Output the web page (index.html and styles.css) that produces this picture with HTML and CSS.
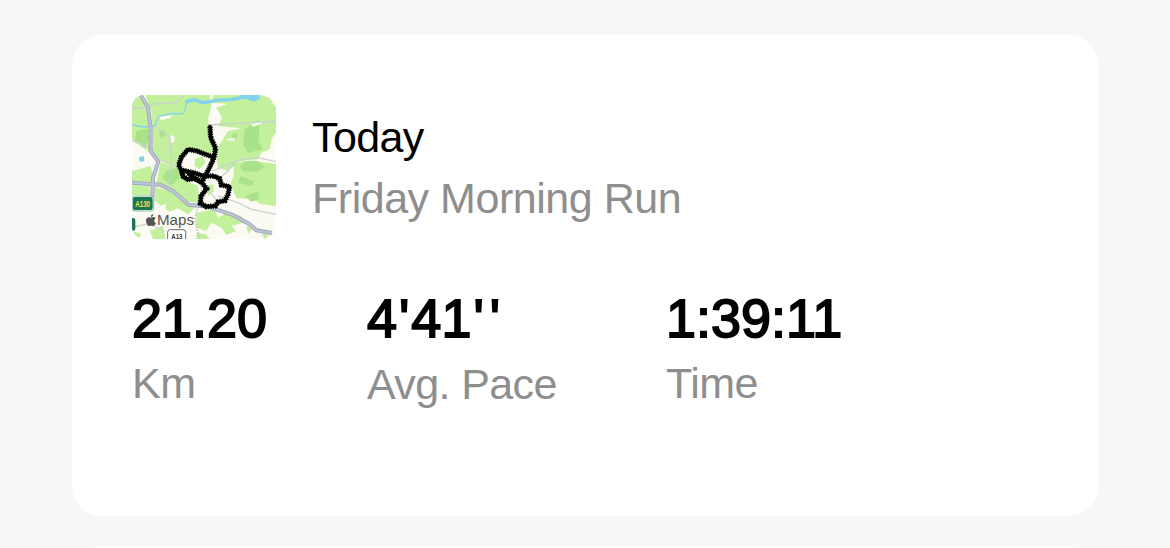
FILE: index.html
```
<!DOCTYPE html>
<html lang="en">
<head>
    <meta charset="UTF-8">
    <title>Activity</title>
    <link rel="stylesheet" href="styles.css">
</head>
<body>
    <div class="feed">
        <div class="card">
            <div class="card-header">
                <svg class="map" viewBox="12 12 432 432">
                    <rect class="land" x="12" y="12" width="432" height="432"/>
                    <!-- fields -->
                    <g class="field">
                        <path d="M52 12H245L250 45L240 85L245 115L265 190L200 180L160 185L150 230L95 208L76 180L74 110L70 60Z"/>
                        <path d="M12 20L35 12L60 60L64 140L66 185L30 160L12 150Z"/>
                        <path d="M255 12H400L425 22L444 50V125L432 140L425 175L400 185L390 205L335 210L300 240L270 230L265 200L272 165L300 120L340 112L270 106L282 80L265 50L300 38L250 36Z"/>
                        <path d="M315 215L370 208L444 220V345L400 340L375 325L325 322L308 280L318 250Z"/>
                        <path d="M98 212L150 232L165 265L210 285L215 335L180 332L140 300L85 276Z"/>
                        <path d="M12 240L68 225L76 260L68 274L12 270ZM12 283L65 286L68 312H12Z"/>
                        <path d="M80 288L130 302L160 330L200 350L180 370L150 352L125 362L80 330Z"/>
                        <path d="M205 365L260 355L270 380L300 362L340 375L345 395L310 405L325 420L295 432L280 410L250 395L235 420L205 410Z"/>
                        <path d="M200 205L225 195L232 215L215 235L200 225ZM235 283L255 280L258 300L240 315Z"/>
                        <path d="M12 420L40 428L30 444H12ZM65 420L105 405L112 444H75ZM205 425L235 430L245 444H205ZM355 405L375 410L360 428ZM400 425L425 432L410 444Z"/>
                    </g>
                    <g class="wood">
                        <path d="M25 120L60 112L64 145L50 170L20 148Z"/>
                        <path d="M92 122L110 118L112 132L98 140Z"/>
                        <path d="M350 115L395 85L392 150L405 175L360 185L345 160Z"/>
                        <path d="M335 225L350 212L390 210L410 228L385 242L345 240Z"/>
                        <path d="M112 240L145 232L155 262L130 285L105 260Z"/>
                        <path d="M338 255L380 272L370 285L330 275ZM350 315L390 302L394 325L370 332Z"/>
                        <path d="M312 130L328 124L325 145L310 148Z"/>
                    </g>
                    <g class="land">
                        <path d="M95 78L130 72L128 80L100 88ZM122 138L138 132L140 150L128 158ZM370 100L405 90L400 98L375 108ZM295 144L322 141L318 149L296 148Z"/>
                        <path d="M12 155L40 170L60 200L50 225L12 235Z"/>
                        <path d="M95 345L115 338L108 362L90 370ZM135 375L155 360L165 375L145 385Z"/>
                    </g>
                    <!-- water -->
                    <g class="water">
                        <path class="stream" d="M12 102L48 108L80 105L92 76L130 68L165 68L174 50L173 30L190 24"/>
                        <path class="river" d="M175 33L200 26L222 35L245 32L270 27L310 26L350 18L395 18"/>
                        <path class="pond" d="M335 12H390L397 22L378 32L350 22ZM33 198L48 196L49 210L35 213Z"/>
                    </g>
                    <!-- small roads -->
                    <g class="lane">
                        <path d="M68 40L145 34L170 12M12 54L60 48M80 105L125 138L132 210L120 285M95 205L150 230M12 146L75 175M240 102L444 90"/>
                        <path d="M255 240L330 208L390 200L444 212M325 208L300 240L265 270"/>
                        <path d="M270 315L330 335L370 355L444 370M245 300L275 340M12 410L60 398L110 420"/>
                    </g>
                    <!-- main roads -->
                    <path class="road-edge" d="M38 12L60 48L68 110V180L91 212L75 260L73 320M12 275L95 281L135 300L182 341L240 347L310 370L365 400L385 418L432 426"/>
                    <path class="road" d="M38 12L60 48L68 110V180L91 212L75 260L73 320M12 275L95 281L135 300L182 341L240 347L310 370L365 400L385 418L432 426"/>
                    <path class="dotted" d="M210 345L200 385L215 444"/>
                    <!-- route -->
                    <path class="route-core" d="M246 107L248 140L263 172L258 200L243 233L228 262L221 274L200 263L179 265L165 256L159 237L152 222L160 199L180 175L207 180L232 190L258 199"/>
                    <path class="route" d="M246 107L248 140L263 172L258 200L243 233L228 262L221 274L200 263L179 265L165 256L159 237L152 222L160 199L180 175L207 180L232 190L258 199"/>
                    <path class="route-core" d="M164 238L200 246L225 255L257 255L275 263L280 282L305 287L300 310L291 329L270 333L262 345L235 347L217 337L219 315L236 293L224 278L203 262L180 246"/>
                    <path class="route" d="M164 238L200 246L225 255L257 255L275 263L280 282L305 287L300 310L291 329L270 333L262 345L235 347L217 337L219 315L236 293L224 278L203 262L180 246"/>
                    <!-- road signs -->
                    <rect class="sign-rim" x="11" y="315" width="66" height="45" rx="8"/>
                    <rect class="sign" x="14" y="318" width="60" height="39" rx="6"/>
                    <text class="sign-text" x="22" y="347" textLength="44" lengthAdjust="spacingAndGlyphs">A130</text>
                    <rect class="sign" x="-10" y="381" width="32" height="38" rx="6"/>
                    <rect class="sign-white" x="119" y="416" width="54" height="40" rx="8"/>
                    <text class="sign-white-text" x="130" y="443" textLength="33" lengthAdjust="spacingAndGlyphs">A13</text>
                    <!-- attribution -->
                    <path class="apple" d="M69 380C73 380 75 377 79 379Q82 380 83 382C76 387 78 394 84 397C81 404 77 406 74 405Q69 402 65 405C59 408 51 391 55 384C58 377 64 378 69 380ZM68 378Q68 371 76 369Q76 377 68 378Z"/>
                    <text class="map-label" x="87" y="403" textLength="111" lengthAdjust="spacingAndGlyphs">Maps</text>
                </svg>
                <div class="titles">
                    <div class="day">Today</div>
                    <div class="name">Friday Morning Run</div>
                </div>
            </div>
            <div class="stats">
                <div class="stat">
                    <div class="value">21.20</div>
                    <div class="label">Km</div>
                </div>
                <div class="stat">
                    <div class="value"><span class="minutes">4'</span>41<span class="seconds">''</span></div>
                    <div class="label pace">Avg. Pace</div>
                </div>
                <div class="stat">
                    <div class="value">1:39:11</div>
                    <div class="label">Time</div>
                </div>
            </div>
        </div>
        <div class="card"></div>
    </div>
</body>
</html>
```
FILE: styles.css
```
body {
    font-family: "Liberation Sans", Arial, sans-serif;
    background-color: #f7f7f7;
    margin: 0;
    overflow: hidden;
}
.feed {
    display: flex;
    flex-direction: column;
    gap: 30px;
    padding: 35px 72px 0;
    height: 513px;
    overflow: hidden;
}
.card {
    box-sizing: border-box;
    flex: none;
    height: 481px;
    padding: 60px;
    background-color: #ffffff;
    border-radius: 30px;
}
.card-header {
    display: flex;
    gap: 36px;
}
.map {
    width: 144px;
    height: 144px;
    border-radius: 12px;
}
.titles {
    padding-top: 12px;
    font-size: 43px;
    line-height: 61px;
    white-space: nowrap;
}
.day {
    color: #000000;
    letter-spacing: -0.6px;
}
.name {
    color: #8e8e8e;
    letter-spacing: -0.47px;
}
.stats {
    display: grid;
    grid-template-columns: 235px 299px 1fr;
    padding-top: 48px;
    white-space: nowrap;
}
.value {
    color: #000000;
    font-size: 54px;
    line-height: 62px;
    -webkit-text-stroke: 1.8px #000000;
}
.minutes {
    letter-spacing: 2px;
}
.seconds {
    margin-left: 2px;
    letter-spacing: 6px;
}
.label {
    color: #8e8e8e;
    font-size: 43px;
    line-height: 68px;
    letter-spacing: -0.5px;
}
.label.pace {
    padding-top: 1px;
    letter-spacing: -0.6px;
}

/* map */
.land {
    fill: #fcfbf3;
}
.field {
    fill: #c3f09c;
}
.wood {
    fill: #aae28a;
}
.water {
    fill: none;
    stroke: #83d3ee;
}
.stream {
    stroke-width: 4;
}
.river {
    stroke-width: 10;
}
.pond {
    fill: #83d3ee;
    stroke: none;
}
.lane {
    fill: none;
    stroke: #cbd1cf;
    stroke-width: 4;
}
.road-edge {
    fill: none;
    stroke: #9ba5b8;
    stroke-width: 12;
    stroke-linejoin: round;
}
.road {
    fill: none;
    stroke: #bdc5d4;
    stroke-width: 7;
    stroke-linejoin: round;
}
.dotted {
    fill: none;
    stroke: #b4bac4;
    stroke-width: 4;
    stroke-dasharray: 5 4;
}
.route-core {
    fill: none;
    stroke: #000000;
    stroke-width: 11;
    stroke-linejoin: round;
    stroke-linecap: round;
}
.route {
    fill: none;
    stroke: #000000;
    stroke-width: 16;
    stroke-dasharray: 4 3;
}
.sign-rim {
    fill: #ffffff;
    stroke: #4f9477;
    stroke-width: 2;
}
.sign {
    fill: #197653;
}
.sign-text {
    fill: #f8e54c;
    font-size: 27px;
    font-weight: bold;
}
.sign-white {
    fill: #ffffff;
    stroke: #666666;
    stroke-width: 3;
}
.sign-white-text {
    fill: #333333;
    font-size: 24px;
    font-weight: bold;
}
.apple {
    fill: #555555;
}
.map-label {
    fill: #555555;
    font-size: 42px;
}
```
